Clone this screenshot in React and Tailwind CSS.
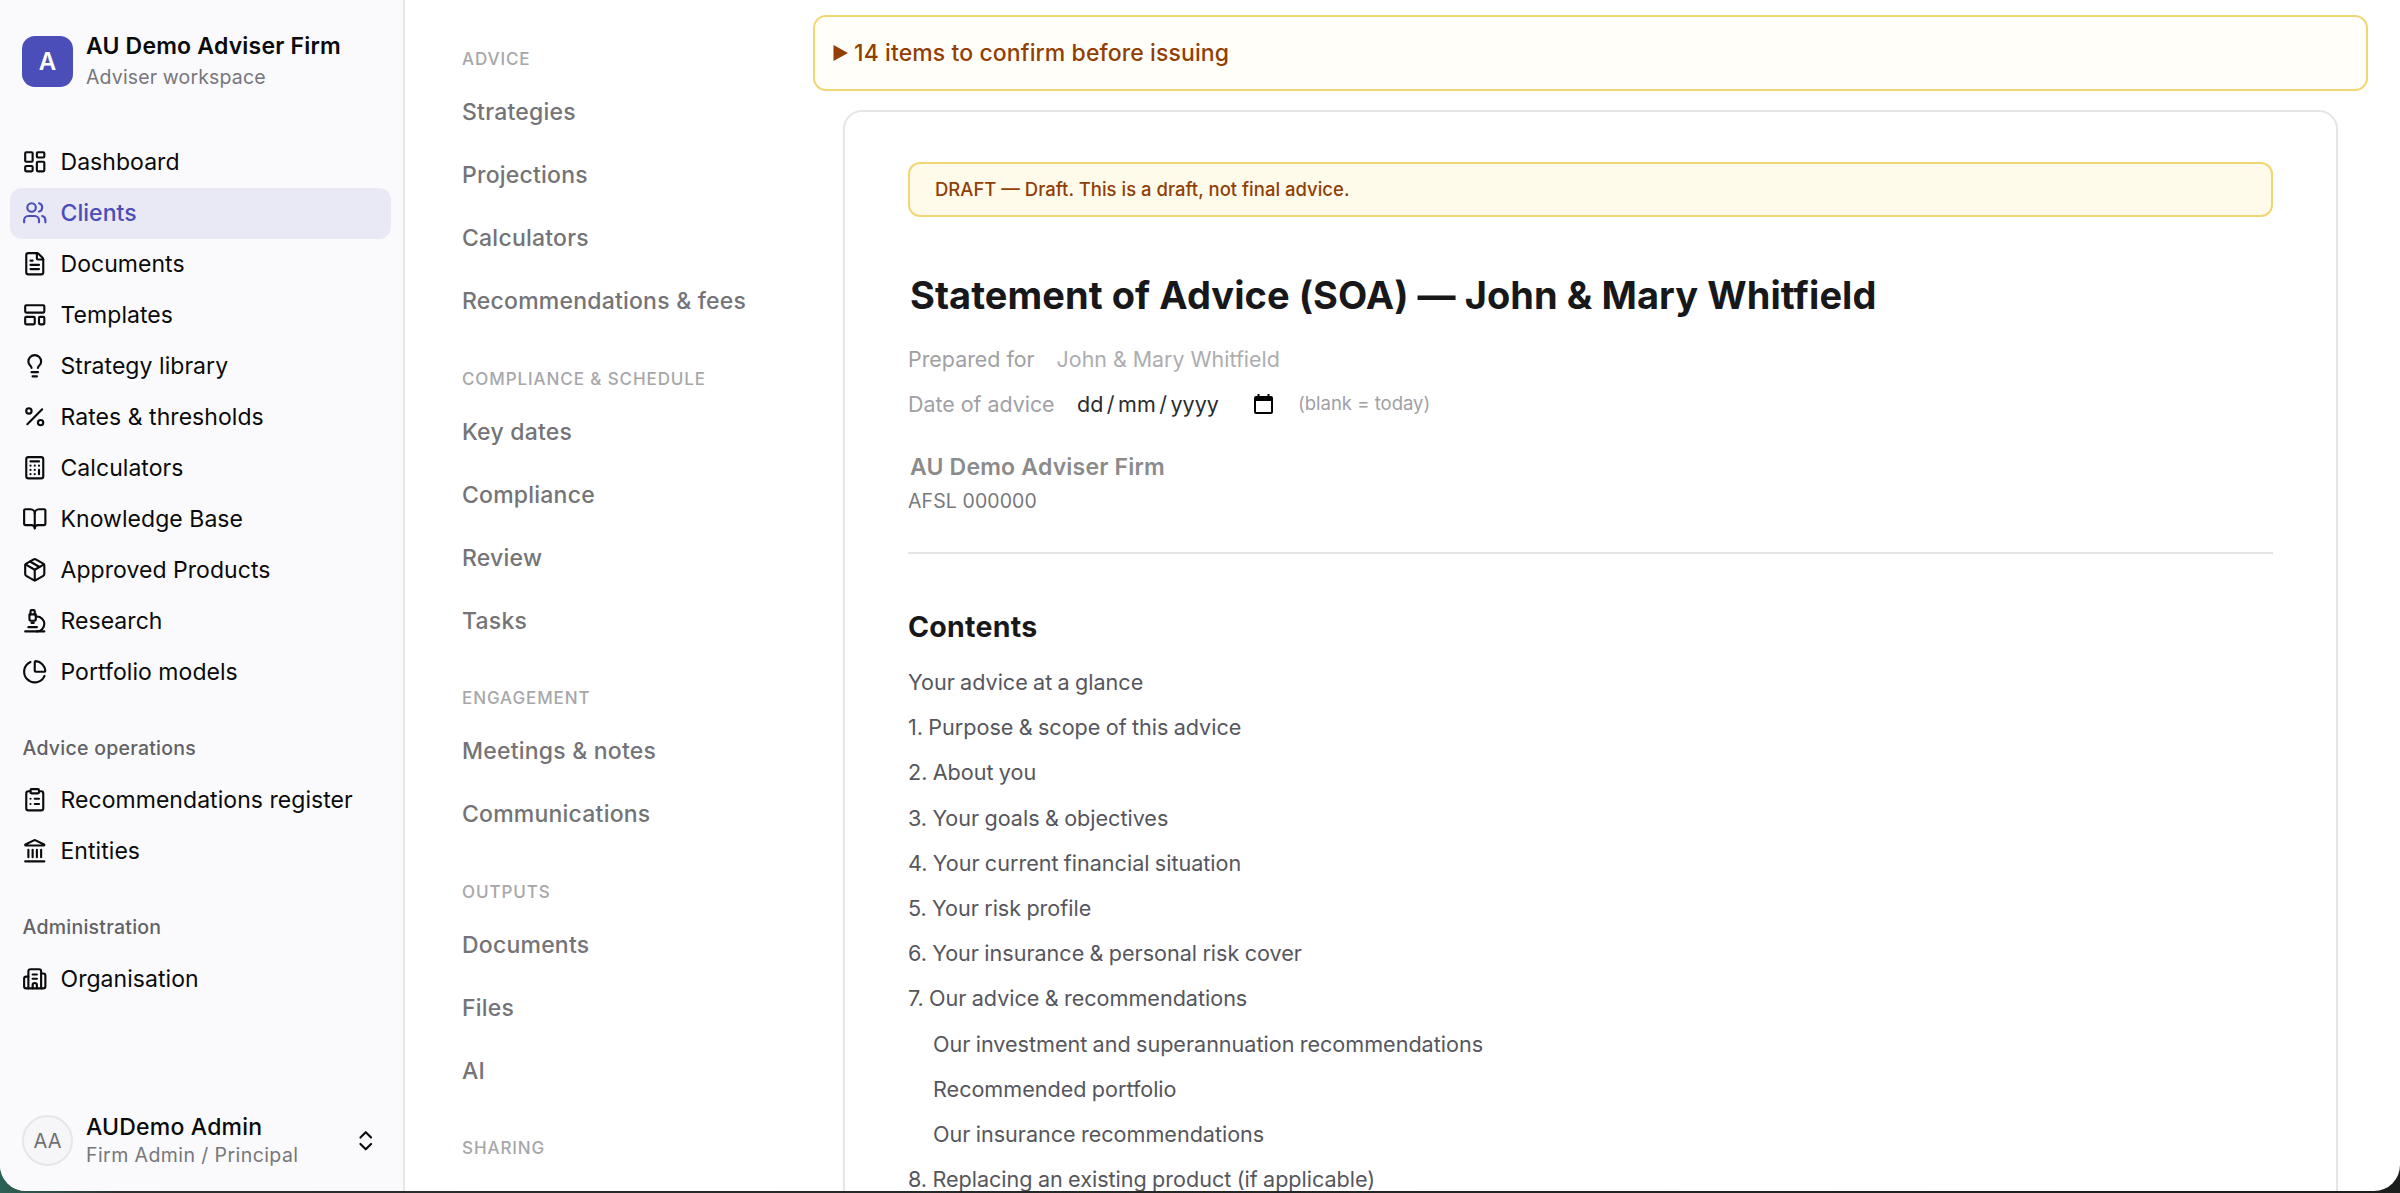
import {
  BookOpen,
  Calculator,
  ChartPie,
  ChevronsUpDown,
  ClipboardList,
  FileText,
  Landmark,
  LayoutDashboard,
  LayoutTemplate,
  Lightbulb,
  Microscope,
  Package,
  Percent,
  Users,
} from 'lucide-react'

// lucide's building-2 in its wider form
function OfficeIcon({ className, strokeWidth = 2 }) {
  return (
    <svg className={className} viewBox="0 0 24 24" fill="none" stroke="currentColor" strokeWidth={strokeWidth} strokeLinecap="round" strokeLinejoin="round">
      <path d="M10 12h4" />
      <path d="M10 8h4" />
      <path d="M14 21v-3a2 2 0 0 0-4 0v3" />
      <path d="M6 10H4a2 2 0 0 0-2 2v7a2 2 0 0 0 2 2h16a2 2 0 0 0 2-2V9a2 2 0 0 0-2-2h-2" />
      <path d="M6 21V5a2 2 0 0 1 2-2h8a2 2 0 0 1 2 2v16" />
    </svg>
  )
}

const mainNav = [
  {
    items: [
      { label: 'Dashboard', icon: LayoutDashboard },
      { label: 'Clients', icon: Users, active: true },
      { label: 'Documents', icon: FileText },
      { label: 'Templates', icon: LayoutTemplate },
      { label: 'Strategy library', icon: Lightbulb },
      { label: 'Rates & thresholds', icon: Percent },
      { label: 'Calculators', icon: Calculator },
      { label: 'Knowledge Base', icon: BookOpen },
      { label: 'Approved Products', icon: Package },
      { label: 'Research', icon: Microscope },
      { label: 'Portfolio models', icon: ChartPie },
    ],
  },
  {
    title: 'Advice operations',
    items: [
      { label: 'Recommendations register', icon: ClipboardList },
      { label: 'Entities', icon: Landmark },
    ],
  },
  {
    title: 'Administration',
    items: [{ label: 'Organisation', icon: OfficeIcon }],
  },
]

const clientNav = [
  { title: 'Advice', items: ['Strategies', 'Projections', 'Calculators', 'Recommendations & fees'] },
  { title: 'Compliance & schedule', items: ['Key dates', 'Compliance', 'Review', 'Tasks'] },
  { title: 'Engagement', items: ['Meetings & notes', 'Communications'] },
  { title: 'Outputs', items: ['Documents', 'Files', 'AI'] },
  { title: 'Sharing', items: [] },
]

const contents = [
  { text: 'Your advice at a glance' },
  { text: '1. Purpose & scope of this advice' },
  { text: '2. About you' },
  { text: '3. Your goals & objectives' },
  { text: '4. Your current financial situation' },
  { text: '5. Your risk profile' },
  { text: '6. Your insurance & personal risk cover' },
  { text: '7. Our advice & recommendations' },
  { text: 'Our investment and superannuation recommendations', sub: true },
  { text: 'Recommended portfolio', sub: true },
  { text: 'Our insurance recommendations', sub: true },
  { text: '8. Replacing an existing product (if applicable)' },
]

function Sidebar() {
  return (
    <aside className="w-[405px] shrink-0 flex flex-col bg-[#fafafc] border-r-2 border-[#e6e6e9]">
      {/* Firm */}
      <div className="flex items-center gap-[13px] pl-[22px] pt-[30px] h-[93px]">
        <div className="w-[51px] h-[51px] shrink-0 rounded-[13px] bg-[#4b4db8] text-white text-[24px] font-semibold flex items-center justify-center">
          A
        </div>
        <div className="whitespace-nowrap">
          <div className="text-[23px] leading-[32px] tracking-[0.2px] font-semibold text-[#0a0a0b]">AU Demo Adviser Firm</div>
          <div className="text-[19.5px] leading-[31px] tracking-[0.15px] text-[#76767b]">Adviser workspace</div>
        </div>
      </div>

      {/* Navigation */}
      <nav className="flex-1 flex flex-col gap-[26px] pt-[43.5px] pl-[10px] pr-[12px]">
        {mainNav.map((group, i) => (
          <div key={i}>
            {group.title && (
              <div className="h-[51px] pl-[12.5px] flex items-center text-[19.5px] tracking-[0.25px] font-medium text-[#616166]">
                {group.title}
              </div>
            )}
            {group.items.map(({ label, icon: Icon, active }) => (
              <a
                key={label}
                className={`h-[51px] pl-[12px] flex items-center gap-[13px] rounded-[12px] text-[23px] tracking-[0.05px] whitespace-nowrap ${
                  active ? 'bg-[#e9e9f6] text-[#4b4db8] font-medium' : 'text-[#0a0a0b]'
                }`}
              >
                <Icon className="w-[25.5px] h-[25.5px] shrink-0" strokeWidth={2} />
                <span>{label}</span>
              </a>
            ))}
          </div>
        ))}
      </nav>

      {/* Current user */}
      <div className="flex items-center gap-[13px] pl-[22px] pr-[25px] h-[51px] mb-[25px]">
        <div className="w-[51px] h-[51px] shrink-0 rounded-full border-2 border-[#e6e6ea] bg-[#f6f6f9] text-[#6f6f74] text-[20px] flex items-center justify-center">
          AA
        </div>
        <div className="flex-1 whitespace-nowrap">
          <div className="text-[23px] leading-[30px] tracking-[0.2px] font-medium text-[#0a0a0b]">AUDemo Admin</div>
          <div className="text-[19.5px] leading-[27px] tracking-[0.42px] text-[#76767b]">Firm Admin / Principal</div>
        </div>
        <ChevronsUpDown className="w-[25.5px] h-[25.5px] text-[#0a0a0b]" />
      </div>
    </aside>
  )
}

function ClientNav() {
  return (
    <nav className="w-[408px] h-[1154px] shrink-0 pl-[57px] pt-[39px] flex flex-col gap-[25.5px] overflow-hidden whitespace-nowrap">
      {clientNav.map((group) => (
        <div key={group.title} className="shrink-0">
          <div className="h-[42px] flex items-center text-[17px] tracking-[0.9px] font-medium uppercase text-[#a7a7aa]">
            {group.title}
          </div>
          {group.items.map((item) => (
            <a key={item} className="h-[63px] flex items-center text-[23px] tracking-[0.22px] font-medium text-[#747478]">
              {item}
            </a>
          ))}
        </div>
      ))}
    </nav>
  )
}

function DateField() {
  return (
    <div className="flex items-center text-[#2b2b2f]">
      <div className="w-[177px] flex items-center text-[21.5px]">
        <span>dd</span>
        <span className="mx-[3.5px]">/</span>
        <span>mm</span>
        <span className="mx-[3.5px]">/</span>
        <span>yyyy</span>
      </div>
      <svg className="w-[19px] h-[20px]" viewBox="0 0 19 20" fill="none">
        <path d="M3.5 0h2v2h8V0h2v2H17a2 2 0 0 1 2 2v14a2 2 0 0 1-2 2H2a2 2 0 0 1-2-2V4a2 2 0 0 1 2-2h1.5z M2 7v11h15V7z" fill="#000" fillRule="evenodd" />
      </svg>
    </div>
  )
}

function StatementDocument() {
  return (
    <article className="mt-[19px] mx-[30px] h-[1200px] shrink-0 rounded-[19px] border-2 border-[#e5e6e8] bg-white px-[63px] pt-[50px] shadow-xs whitespace-nowrap">
      <div className="h-[55px] pl-[25px] flex items-center rounded-[12px] border-2 border-[#f2d673] bg-[#fffbea] text-[18.5px] font-medium text-[#8f3f08]">
        DRAFT — Draft. This is a draft, not final advice.
      </div>

      <h1 className="mt-[53px] pl-[2px] text-[38px] leading-[50px] tracking-[0.06px] font-bold text-[#18181b]">
        Statement of Advice (SOA) — John &amp; Mary Whitfield
      </h1>

      <div className="mt-[17px] text-[21.4px] text-[#a0a0a5]">
        <div className="h-[45px] flex items-center gap-[22px]">
          <span>Prepared for</span>
          <span className="text-[#adadb0]">John &amp; Mary Whitfield</span>
        </div>
        <div className="h-[44px] flex items-center">
          <span className="w-[169px]">Date of advice</span>
          <DateField />
          <span className="ml-[25px] text-[18.5px]">(blank = today)</span>
        </div>
      </div>

      <div className="mt-[24px] pb-[34px] border-b-2 border-[#e5e5e7]">
        <div className="pl-[2px] text-[23px] leading-[34px] tracking-[0.2px] font-semibold text-[#8b8b8b]">AU Demo Adviser Firm</div>
        <div className="text-[19.5px] leading-[34px] tracking-[0.1px] text-[#77777c]">AFSL 000000</div>
      </div>

      <h2 className="mt-[53px] text-[28.5px] leading-[40px] tracking-[0.25px] font-bold text-[#18181b]">Contents</h2>
      <ul className="mt-[13px] text-[21.6px] leading-[45.2px] tracking-[-0.02px] [word-spacing:-0.7px] text-[#56565d]">
        {contents.map(({ text, sub }) => (
          <li key={text} className={sub ? 'pl-[25px]' : ''}>{text}</li>
        ))}
      </ul>
    </article>
  )
}

export default function App() {
  return (
    <div className="w-[2400px] h-[1193px] overflow-hidden bg-linear-to-r from-[#2c6257] from-0% via-[#2b302f] via-5% to-[#1b1e1d] font-[Inter,sans-serif]">
      <div className="h-[1191px] flex overflow-hidden rounded-b-[26px] bg-white">
        <Sidebar />
        <ClientNav />
        <main className="flex-1 flex flex-col pt-[15px] pr-[32px]">
          <div className="h-[76px] shrink-0 pl-[18px] flex items-center gap-[6px] rounded-[13px] border-2 border-[#f2d673] bg-[#fffef8] text-[23px] tracking-[0.1px] font-medium text-[#923f04]">
            <svg className="w-[15px] h-[16px]" viewBox="0 0 15 16" fill="currentColor">
              <path d="M0.5 0L15 8L0.5 16z" />
            </svg>
            <span>14 items to confirm before issuing</span>
          </div>
          <StatementDocument />
        </main>
      </div>
    </div>
  )
}
